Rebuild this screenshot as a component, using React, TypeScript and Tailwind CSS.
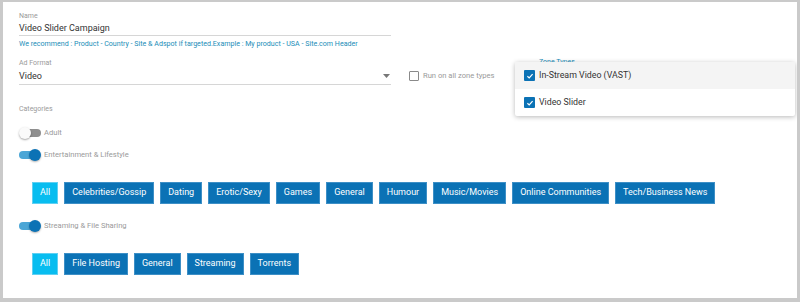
import React from "react";

const Toggle = ({ on }: { on: boolean }) =>
  on ? (
    <div className="relative w-[22px] h-[14px] flex items-center">
      <div className="w-[19px] h-[8px] rounded-full bg-[#4ba6d6]" />
      <div className="absolute right-0 top-[1px] w-[12px] h-[12px] rounded-full bg-[#0b72b5] shadow-[0_1px_2px_rgba(0,0,0,0.3)]" />
    </div>
  ) : (
    <div className="relative w-[22px] h-[14px] flex items-center">
      <div className="w-[19px] h-[8px] rounded-full bg-[#8f8f8f] ml-[3px]" />
      <div className="absolute left-0 top-[1px] w-[12px] h-[12px] rounded-full bg-[#fafafa] shadow-[0_1px_2px_rgba(0,0,0,0.35)]" />
    </div>
  );

const Chip = ({ label, active }: { label: string; active?: boolean }) => (
  <div
    className={`h-[22px] px-[7px] flex items-center text-[9px] text-white border ${
      active ? "bg-[#08bdf0] border-[#5fd0f2]" : "bg-[#0b72b5] border-[#3d8fc6]"
    }`}
  >
    {label}
  </div>
);

const Check = () => (
  <div className="w-[11px] h-[11px] bg-[#0b72b5] rounded-[1px] flex items-center justify-center">
    <svg width="8" height="8" viewBox="0 0 8 8">
      <path d="M1.4 4.2 L3.2 5.9 L6.6 2.2" stroke="white" strokeWidth="1.2" fill="none" />
    </svg>
  </div>
);

export default function App() {
  const cats1 = [
    "Celebrities/Gossip",
    "Dating",
    "Erotic/Sexy",
    "Games",
    "General",
    "Humour",
    "Music/Movies",
    "Online Communities",
    "Tech/Business News",
  ];
  const cats2 = ["File Hosting", "General", "Streaming", "Torrents"];
  return (
    <div
      className="w-[800px] h-[302px] bg-white border-l-[3px] border-t-2 border-r-[3px] border-b-4 border-[#cacaca] relative overflow-hidden"
      style={{ fontFamily: "Roboto, 'Liberation Sans', sans-serif" }}
    >
      <div className="pl-[16px] pt-[9px]">
        {/* Name */}
        <div className="w-[372px]">
          <div className="text-[7px] leading-[10px] text-[#9a9a9a]">Name</div>
          <div className="text-[9px] leading-[12px] text-[#333] mt-[1px] pb-[1px] border-b border-[#d6d6d6]">
            Video Slider Campaign
          </div>
        </div>
        <div className="text-[7.1px] leading-[10px] text-[#1b8db8] mt-[3px]">
          We recommend : Product - Country - Site &amp; Adspot if targeted.Example : My product - USA - Site.com Header
        </div>

        {/* Ad format row */}
        <div className="flex items-start mt-[9px]">
          <div className="w-[372px] shrink-0">
            <div className="text-[7px] leading-[10px] text-[#9a9a9a]">Ad Format</div>
            <div className="flex items-center justify-between text-[9px] leading-[12px] text-[#333] mt-[2px] pb-[2px] border-b border-[#d6d6d6]">
              <span>Video</span>
              <svg width="7" height="4" viewBox="0 0 7 4" className="mr-[1px]">
                <path d="M0 0 L7 0 L3.5 4 Z" fill="#777" />
              </svg>
            </div>
          </div>
          <div className="flex items-center ml-[18px] mt-[12px] h-[12px] w-[130px] shrink-0">
            <div className="w-[10px] h-[10px] border-[1.5px] border-[#8a8a8a] rounded-[1px]" />
            <span className="ml-[4px] text-[7.6px] text-[#9a9a9a]">Run on all zone types</span>
          </div>
          <div className="-mt-[1px] text-[7px] leading-[10px] text-[#1b8db8]">Zone Types</div>
        </div>

        {/* Categories */}
        <div className="text-[7px] leading-[10px] text-[#9a9a9a] mt-[19px]">Categories</div>
        <div className="flex items-center mt-[12px]">
          <Toggle on={false} />
          <span className="ml-[3px] text-[7.6px] text-[#9a9a9a]">Adult</span>
        </div>
        <div className="flex items-center mt-[8px]">
          <Toggle on={true} />
          <span className="ml-[3px] text-[7.6px] text-[#9a9a9a]">Entertainment &amp; Lifestyle</span>
        </div>
        <div className="flex gap-[6px] ml-[13px] mt-[20px]">
          <Chip label="All" active />
          {cats1.map((c) => (
            <Chip key={c} label={c} />
          ))}
        </div>
        <div className="flex items-center mt-[15px]">
          <Toggle on={true} />
          <span className="ml-[3px] text-[7.6px] text-[#9a9a9a]">Streaming &amp; File Sharing</span>
        </div>
        <div className="flex gap-[6px] ml-[13px] mt-[20px]">
          <Chip label="All" active />
          {cats2.map((c) => (
            <Chip key={c} label={c} />
          ))}
        </div>
      </div>

      {/* Zone types dropdown menu */}
      <div className="absolute left-[512px] top-[60px] w-[280px] bg-white rounded-[2px] shadow-[0_1px_5px_rgba(0,0,0,0.28)]">
        <div className="h-[27px] bg-[#f4f4f4] flex items-center pl-[9px]">
          <Check />
          <span className="ml-[4px] text-[8.8px] text-[#333]">In-Stream Video (VAST)</span>
        </div>
        <div className="h-[27px] flex items-center pl-[9px]">
          <Check />
          <span className="ml-[4px] text-[8.8px] text-[#333]">Video Slider</span>
        </div>
      </div>
    </div>
  );
}
